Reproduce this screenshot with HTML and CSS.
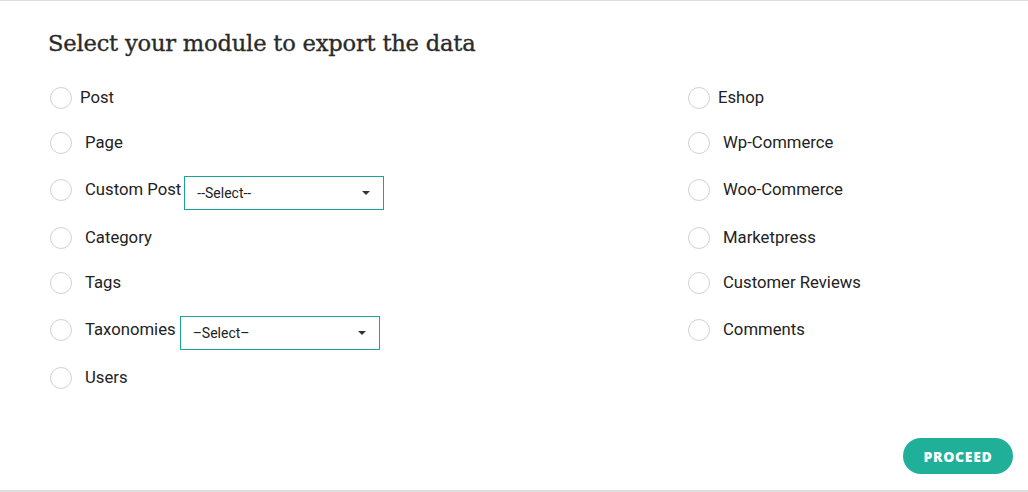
FILE: index.html
```html
<!DOCTYPE html>
<html>
<head>
<meta charset="utf-8">
<link rel="stylesheet" href="styles.css">
</head>
<body>
<div class="panel">
  <h1 class="title">Select your module to export the data</h1>
  <div class="modules">
    <label class="row"><span class="radio"></span><span class="label tight">Post</span></label>
    <label class="row"><span class="radio"></span><span class="label tight">Eshop</span></label>

    <label class="row"><span class="radio"></span><span class="label">Page</span></label>
    <label class="row"><span class="radio"></span><span class="label">Wp-Commerce</span></label>

    <div class="row tall"><span class="radio"></span><span class="label">Custom Post</span>
      <div class="select sel-custom"><span>--Select--</span><span class="caret"></span></div>
    </div>
    <label class="row tall"><span class="radio"></span><span class="label">Woo-Commerce</span></label>

    <label class="row"><span class="radio"></span><span class="label">Category</span></label>
    <label class="row"><span class="radio"></span><span class="label">Marketpress</span></label>

    <label class="row"><span class="radio"></span><span class="label">Tags</span></label>
    <label class="row"><span class="radio"></span><span class="label">Customer Reviews</span></label>

    <div class="row tall"><span class="radio"></span><span class="label">Taxonomies</span>
      <div class="select sel-tax"><span>–Select–</span><span class="caret"></span></div>
    </div>
    <label class="row tall"><span class="radio"></span><span class="label">Comments</span></label>

    <label class="row"><span class="radio"></span><span class="label">Users</span></label>
    <div class="row"></div>
  </div>
  <div class="footer">
    <button class="proceed">PROCEED</button>
  </div>
</div>
</body>
</html>
```
FILE: styles.css
```css
* { box-sizing: border-box; }
html, body { margin: 0; padding: 0; background: #fff; }
body { font-family: Roboto, "Liberation Sans", sans-serif; color: #222; }

.panel {
  height: 492px;
  border-top: 1px solid #dcdcdc;
  border-bottom: 2px solid #dcdcdc;
  display: flex;
  flex-direction: column;
  padding: 0 15px 0 48px;
}

.title {
  margin: 26px 0 0 0;
  font-family: "DejaVu Serif", "Liberation Serif", serif;
  font-weight: normal;
  font-size: 22.6px;
  line-height: 32px;
  letter-spacing: -0.2px;
  color: #2a2a2a;
  -webkit-text-stroke: 0.35px #2a2a2a;
}

.modules {
  margin-top: 16px;
  display: grid;
  grid-template-columns: 638px 1fr;
}

.row {
  display: flex;
  align-items: center;
  height: 45px;
  font-size: 16.7px;
  line-height: 20px;
}
.row.tall { height: 50px; }

.radio {
  width: 22px;
  height: 22px;
  margin-left: 2px;
  border: 1px solid #d2d2d2;
  border-radius: 50%;
  flex: none;
}

.label { margin-left: 13px; }
.label.tight { margin-left: 8px; }

.select {
  margin-left: 3px;
  margin-top: 6px;
  width: 200px;
  height: 34px;
  border: 1px solid #1aa396;
  display: flex;
  align-items: center;
  justify-content: space-between;
  padding: 0 12px 0 12px;
  font-size: 14px;
  color: #222;
}
.sel-tax { margin-left: 4px; }

.caret {
  width: 0;
  height: 0;
  border-left: 4px solid transparent;
  border-right: 4px solid transparent;
  border-top: 4px solid #333;
  margin-right: 1px;
}

.footer {
  margin-top: auto;
  margin-bottom: 16px;
  display: flex;
  justify-content: flex-end;
}

.proceed {
  width: 110px;
  height: 36px;
  border: none;
  border-radius: 18px;
  background: #20b09a;
  color: #fff;
  font-family: "Open Sans", "Liberation Sans", sans-serif;
  font-weight: 800;
  font-size: 14px;
  letter-spacing: 0.7px;
  padding: 0;
}
```
